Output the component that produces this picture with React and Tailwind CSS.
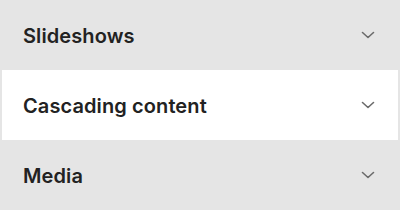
import React from 'react';

const items = [
  { label: 'Slideshows', active: false },
  { label: 'Cascading content', active: true },
  { label: 'Media', active: false },
];

function Chevron() {
  return (
    <svg width="16" height="16" viewBox="0 0 16 16" fill="none" className="text-[#6b6b6b]">
      <path d="M2.5 5.5 8 10.5l5.5-5" stroke="currentColor" strokeWidth="1.6" strokeLinecap="round" strokeLinejoin="round" />
    </svg>
  );
}

export default function App() {
  return (
    <div className="w-[400px] h-[210px] bg-[#e5e5e5] font-['Inter',sans-serif]">
      {items.map(item => (
        <div
          key={item.label}
          className={`h-[70px] flex items-center justify-between ${item.active ? 'bg-white mx-[2px] pl-[21px] pr-[22px]' : 'pl-[23px] pr-[24px]'}`}
        >
          <span className="text-[20px] font-semibold text-[#222222] tracking-[0.1px] leading-none mt-[1px]">{item.label}</span>
          <Chevron />
        </div>
      ))}
    </div>
  );
}
